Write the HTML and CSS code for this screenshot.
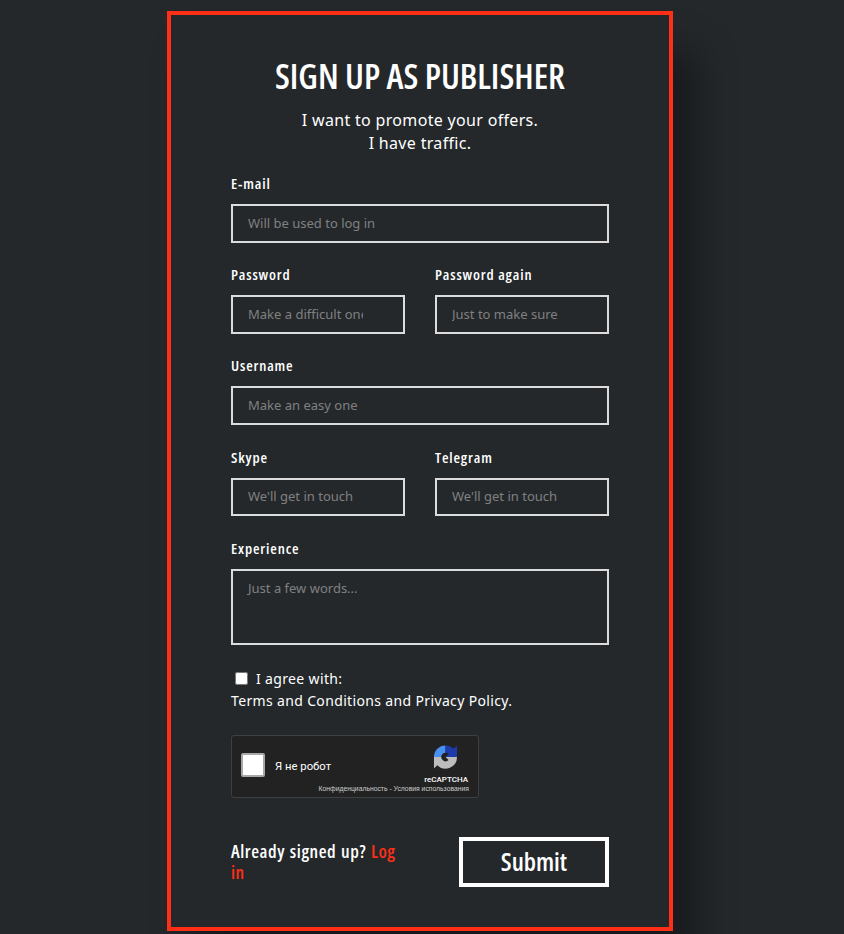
FILE: index.html
```html
<!DOCTYPE html>
<html lang="en">
<head>
<meta charset="utf-8">
<title>Sign up as publisher</title>
<link rel="stylesheet" href="styles.css">
</head>
<body>
<main class="page">
  <form class="card">
    <h1 class="title">SIGN UP AS PUBLISHER</h1>
    <p class="lead">I want to promote your offers.<br>I have traffic.</p>

    <div class="field">
      <label class="label">E-mail</label>
      <input class="input" type="text" placeholder="Will be used to log in">
    </div>
    <div class="row">
      <div class="field">
        <label class="label">Password</label>
        <input class="input" type="text" placeholder="Make a difficult one">
      </div>
      <div class="field">
        <label class="label">Password again</label>
        <input class="input" type="text" placeholder="Just to make sure">
      </div>
    </div>
    <div class="field">
      <label class="label">Username</label>
      <input class="input" type="text" placeholder="Make an easy one">
    </div>
    <div class="row">
      <div class="field">
        <label class="label">Skype</label>
        <input class="input" type="text" placeholder="We'll get in touch">
      </div>
      <div class="field">
        <label class="label">Telegram</label>
        <input class="input" type="text" placeholder="We'll get in touch">
      </div>
    </div>
    <div class="field">
      <label class="label">Experience</label>
      <textarea class="input area" placeholder="Just a few words..."></textarea>
    </div>

    <div class="agree">
      <input class="check" type="checkbox">
      <span>I agree with:</span><br>
      <span>Terms and Conditions and Privacy Policy.</span>
    </div>

    <div class="captcha">
      <div class="captcha-box"></div>
      <span class="captcha-text">Я не робот</span>
      <div class="captcha-brand">
        <svg class="captcha-logo" viewBox="0 0 26 26" width="25" height="26">
          <path fill="#4a90f0" d="M13 1A12 12 0 0 0 1 13H8.500A4.500 4.500 0 0 1 13 8.500Z"/>
          <path fill="#1c3aa9" d="M13 1A12 12 0 0 1 21.500 4.500L25 1V13H13L16.200 9.800A4.500 4.500 0 0 0 13 8.500Z"/>
          <path fill="#bdbdbd" d="M1 13H8.500A4.500 4.500 0 0 0 16.200 16.200L13 13H25A12 12 0 0 1 4.500 21.500L1 25Z"/>
        </svg>
        <span class="captcha-name">reCAPTCHA</span>
      </div>
      <span class="captcha-links">Конфиденциальность - Условия использования</span>
    </div>

    <div class="footer">
      <p class="already">Already signed up? <a class="login" href="#">Log in</a></p>
      <button class="submit" type="button">Submit</button>
    </div>
  </form>
</main>
</body>
</html>
```
FILE: styles.css
```css
* { box-sizing: border-box; }
html, body { margin: 0; height: 100%; }
body {
  background: #24282b;
  color: #fff;
  font-family: "Noto Sans", "Open Sans", sans-serif;
  overflow: hidden;
}
.page { padding: 11px 4px 0 0; display: flex; justify-content: center; }
.card {
  width: 506px;
  height: 920px;
  border: 4px solid #ff2f17;
  background: #24282b;
  padding: 40px 60px 0;
  box-shadow: 24px 40px 36px rgba(0, 0, 0, .35);
}
.title {
  margin: 0;
  font-family: "Open Sans", sans-serif;
  font-stretch: 75%;
  font-size: 35px;
  line-height: 42px;
  font-weight: 600;
  text-align: center;
  white-space: nowrap;
}
.lead {
  margin: 12px 0 0;
  font-size: 16px;
  line-height: 23px;
  letter-spacing: .32px;
  text-align: center;
}
.field { margin-top: 21.500px; flex: 1 1 0; min-width: 0; }
.lead + .field { margin-top: 18px; }
.row { display: flex; gap: 30px; margin-top: 21.500px; }
.row .field { margin-top: 0; }
.label {
  display: block;
  font-family: "Open Sans", sans-serif;
  font-stretch: 75%;
  font-size: 15px;
  line-height: 20px;
  font-weight: 600;
  letter-spacing: .85px;
  margin-bottom: 11px;
}
.input {
  display: block;
  width: 100%;
  height: 38.700px;
  background: transparent;
  border: 2px solid #dcdcdc;
  border-radius: 0;
  padding: 0 40px 1px 15px;
  color: #fff;
  font-family: "Noto Sans", sans-serif;
  font-size: 13px;
  outline: none;
}
.input::placeholder { color: #808080; opacity: 1; }
.area { height: 76px; padding-top: 8px; resize: none; }
.agree { margin-top: 23.200px; font-size: 14px; line-height: 22px; letter-spacing: .35px; }
.check { width: 13px; height: 13px; margin: 0 4px 0 4px; vertical-align: -1px; }
.captcha {
  position: relative;
  width: 248px;
  height: 63px;
  margin-top: 23px;
  background: #222;
  border: 1px solid #3f3f3f;
  border-radius: 3px;
  display: flex;
  align-items: center;
  padding: 0 10px 0 9px;
}
.captcha-box {
  width: 24px;
  height: 24px;
  background: #fff;
  border: 2px solid #a8a8a8;
  border-radius: 2px;
  margin: 0 10px 3px 0;
}
.captcha-text { font-family: Roboto, sans-serif; font-size: 11.300px; }
.captcha-brand {
  margin-left: auto;
  display: flex;
  flex-direction: column;
  align-items: center;
  align-self: flex-start;
  padding-top: 8px;
}
.captcha-logo { display: block; margin-right: 2px; }
.captcha-name { font-family: Roboto, "Liberation Sans", sans-serif; font-size: 8px; line-height: 11px; font-weight: 500; margin-top: 4px; }
.captcha-links {
  position: absolute;
  right: 9px;
  bottom: 4px;
  font-family: "Liberation Sans", sans-serif;
  font-size: 6.800px;
  line-height: 8px;
  color: #ccc;
  white-space: nowrap;
}
.footer { display: flex; justify-content: space-between; margin-top: 39px; align-items: flex-start; }
.already {
  width: 170px;
  margin: 4px 0 0;
  font-family: "Open Sans", sans-serif;
  font-stretch: 75%;
  font-size: 18px;
  line-height: 21px;
  font-weight: 600;
  letter-spacing: .55px;
  word-spacing: 1px;
}
.login { color: #ff2f17; text-decoration: none; }
.submit {
  width: 150px;
  height: 50px;
  background: transparent;
  border: 4px solid #fff;
  color: #fff;
  font-family: "Open Sans", sans-serif;
  font-stretch: 75%;
  font-size: 25.500px;
  font-weight: 600;
  padding: 0 0 2px;
}
```
